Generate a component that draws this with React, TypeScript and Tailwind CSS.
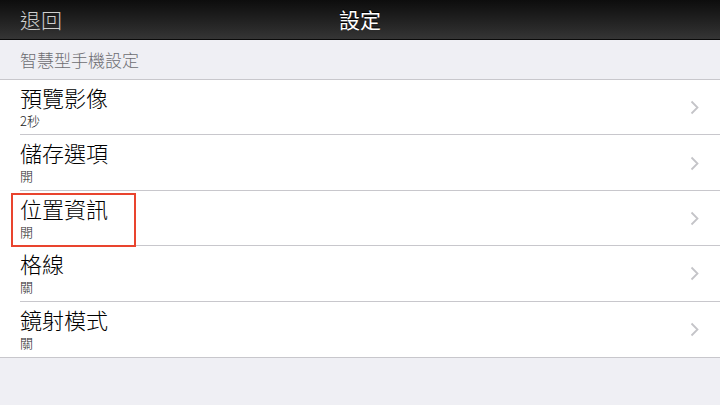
import React from "react";

interface SettingRow {
  title: string;
  value: string;
  highlighted?: boolean;
}

const rows: SettingRow[] = [
  { title: "預覽影像", value: "2秒" },
  { title: "儲存選項", value: "開" },
  { title: "位置資訊", value: "開", highlighted: true },
  { title: "格線", value: "關" },
  { title: "鏡射模式", value: "關" },
];

const font = {
  fontFamily: '"Noto Sans CJK TC", "Noto Sans", "Liberation Sans", sans-serif',
};

const Chevron: React.FC = () => (
  <svg width="9" height="15" viewBox="0 0 9 15" className="shrink-0">
    <path d="M1.5 1.5 L7.5 7.5 L1.5 13.5" fill="none" stroke="#c4c4c8" strokeWidth="1.8" />
  </svg>
);

export default function App() {
  return (
    <div className="w-[720px] h-[405px] bg-[#efeff4] overflow-hidden" style={font}>
      {/* nav bar */}
      <div className="h-10 flex items-center relative bg-gradient-to-b from-[#0d0d0d] to-[#353535] border-b border-[#0a0a0a]">
        <span className="pl-5 text-[21px] text-[#cfcfcf] leading-none font-light">退回</span>
        <span className="absolute left-0 right-0 text-center text-[21px] text-white leading-none [text-shadow:0_-1px_0_#000]">
          設定
        </span>
      </div>

      {/* section header */}
      <div className="h-10 flex items-center pl-5 text-[17px] text-[#6d6d72] font-light border-b border-[#c8c7cc]">
        智慧型手機設定
      </div>

      <div className="bg-white border-b border-[#c8c7cc]">
        {rows.map((row, i) => (
          <div key={row.title} className="relative h-[55.4px] flex items-center pl-5 pr-[21px]">
            <div className="flex-1 flex flex-col self-stretch pt-[4px]">
              <span className="text-[22px] leading-[26px] text-black font-light">{row.title}</span>
              <span className="text-[13px] leading-[15px] mt-[3px] text-[#1a1a1a] font-light">{row.value}</span>
            </div>
            <Chevron />
            {i < rows.length - 1 && (
              <div className="absolute left-5 right-0 bottom-0 h-px bg-[#c8c7cc]" />
            )}
            {row.highlighted && (
              <div className="absolute left-[11px] top-[2px] w-[125px] h-[54px] border-2 border-[#e9442e]" />
            )}
          </div>
        ))}
      </div>
    </div>
  );
}
